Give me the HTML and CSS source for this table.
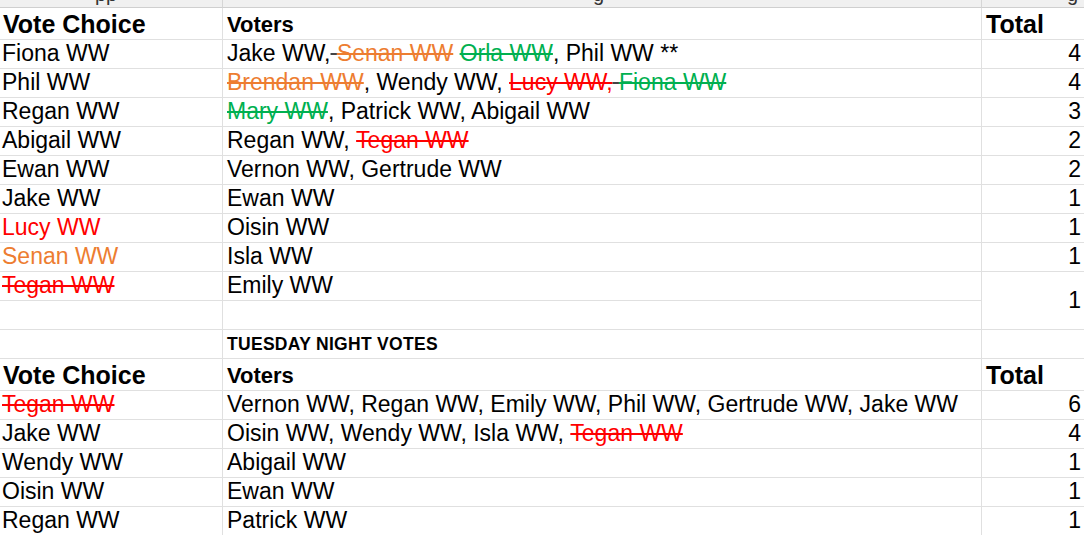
FILE: index.html
```html
<!DOCTYPE html>
<html>
<head>
<meta charset="utf-8">
<link rel="stylesheet" href="styles.css">
</head>
<body>
<div class="sheet">
  <div class="s s1"><span class="desc">pp</span></div>
  <div class="s s2"><span class="desc">g</span></div>
  <div class="s s3"><span class="desc">g</span></div>

  <div class="c h big">Vote Choice</div>
  <div class="c h v mid">Voters</div>
  <div class="c h t big x">Total</div>

  <div class="c">Fiona WW</div>
  <div class="c v">Jake WW,<s class="k">&nbsp;</s><s class="or">Senan WW</s>&nbsp;<s class="gr">Orla WW</s>, Phil WW **</div>
  <div class="c num x">4</div>

  <div class="c">Phil WW</div>
  <div class="c v"><s class="or">Brendan WW</s>, Wendy WW,&nbsp;<s class="rd">Lucy WW,</s><s class="k">&nbsp;</s><s class="gr">Fiona WW</s></div>
  <div class="c num x">4</div>

  <div class="c">Regan WW</div>
  <div class="c v"><s class="gr">Mary WW</s>, Patrick WW, Abigail WW</div>
  <div class="c num x">3</div>

  <div class="c">Abigail WW</div>
  <div class="c v">Regan WW,&nbsp;<s class="rd">Tegan WW</s></div>
  <div class="c num x">2</div>

  <div class="c">Ewan WW</div>
  <div class="c v">Vernon WW, Gertrude WW</div>
  <div class="c num x">2</div>

  <div class="c">Jake WW</div>
  <div class="c v">Ewan WW</div>
  <div class="c num x">1</div>

  <div class="c"><span class="rd">Lucy WW</span></div>
  <div class="c v">Oisin WW</div>
  <div class="c num x">1</div>

  <div class="c"><span class="or">Senan WW</span></div>
  <div class="c v">Isla WW</div>
  <div class="c num x">1</div>

  <div class="c"><s class="rd">Tegan WW</s></div>
  <div class="c v">Emily WW</div>
  <div class="c num x merge">1</div>

  <div class="c"></div>
  <div class="c v"></div>

  <div class="c"></div>
  <div class="c v title">TUESDAY NIGHT VOTES</div>
  <div class="c x"></div>

  <div class="c h big">Vote Choice</div>
  <div class="c h v mid">Voters</div>
  <div class="c h t big x">Total</div>

  <div class="c"><s class="rd">Tegan WW</s></div>
  <div class="c v">Vernon WW, Regan WW, Emily WW, Phil WW, Gertrude WW, Jake WW</div>
  <div class="c num x">6</div>

  <div class="c">Jake WW</div>
  <div class="c v">Oisin WW, Wendy WW, Isla WW,&nbsp;<s class="rd">Tegan WW</s></div>
  <div class="c num x">4</div>

  <div class="c">Wendy WW</div>
  <div class="c v">Abigail WW</div>
  <div class="c num x">1</div>

  <div class="c">Oisin WW</div>
  <div class="c v">Ewan WW</div>
  <div class="c num x">1</div>

  <div class="c">Regan WW</div>
  <div class="c v">Patrick WW</div>
  <div class="c num x">1</div>
</div>
</body>
</html>
```

FILE: styles.css
```css
html, body {
  margin: 0;
  padding: 0;
  background: #ffffff;
  overflow: hidden;
}

.sheet {
  display: grid;
  grid-template-columns: 223px 759px 102px;
  width: 1084px;
  font-family: "Liberation Sans", Arial, sans-serif;
  color: #000;
}

.s {
  height: 8px;
  box-sizing: border-box;
  background: #f0f0f0;
  border-bottom: 1px solid #cfcfcf;
  border-right: 1px solid #d6d6d6;
  overflow: hidden;
}

.s3 {
  border-right: none;
}

.desc {
  display: block;
  font-size: 20px;
  line-height: 20px;
  margin-top: -16px;
  color: #333;
}

.s1 .desc { padding-left: 95px; }
.s2 .desc { padding-left: 370px; }
.s3 .desc { padding-left: 85px; }

.c {
  box-sizing: border-box;
  height: 29px;
  border-bottom: 1px solid #e0e0e0;
  border-right: 1px solid #e0e0e0;
  display: flex;
  align-items: flex-end;
  padding: 0 0 1px 2px;
  font-size: 23px;
  white-space: nowrap;
  overflow: hidden;
}

.c.v {
  padding-left: 4px;
}

.c.h {
  height: 32px;
  font-weight: bold;
  padding-bottom: 0;
}

.c.h.big {
  font-size: 25px;
  padding-left: 3px;
}

.c.h.mid {
  font-size: 22px;
  padding-bottom: 1px;
}

.c.h.t {
  padding-left: 4px;
}

.c.num {
  justify-content: flex-end;
  padding-right: 3px;
}

.c.x {
  border-right: none;
}

.c.merge {
  grid-row: span 2;
  height: auto;
  align-items: center;
}

.title {
  font-size: 17.5px;
  font-weight: bold;
  letter-spacing: 0.3px;
  padding-bottom: 3px;
}

s {
  text-decoration-thickness: 1.5px;
}

.or { color: #ed7d31; }
.gr { color: #00b050; }
.rd { color: #ff0000; }
.k { color: #444; }
```
